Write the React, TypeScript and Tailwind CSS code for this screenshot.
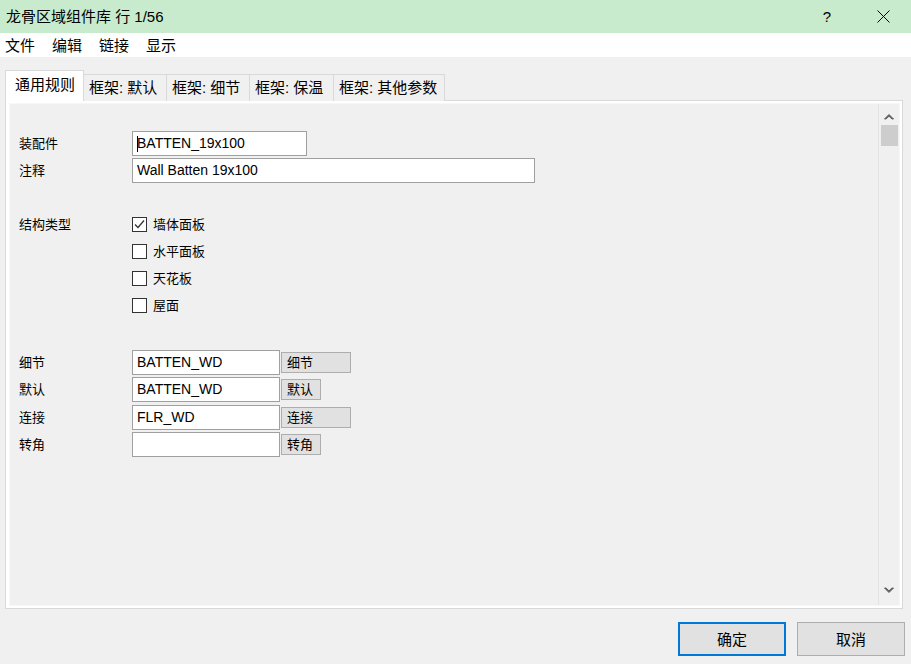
import { useState } from 'react';

const tabs = [
  { label: '通用规则', w: 'w-[79px]' },
  { label: '框架: 默认', w: 'w-[83px]' },
  { label: '框架: 细节', w: 'w-[83px]' },
  { label: '框架: 保温', w: 'w-[84px]' },
  { label: '框架: 其他参数', w: 'w-[111px]' },
];

const structureTypes = [
  { label: '墙体面板', checked: true },
  { label: '水平面板', checked: false },
  { label: '天花板', checked: false },
  { label: '屋面', checked: false },
];

const linkRows = [
  { label: '细节', value: 'BATTEN_WD', button: '细节', wide: true },
  { label: '默认', value: 'BATTEN_WD', button: '默认', wide: false },
  { label: '连接', value: 'FLR_WD', button: '连接', wide: true },
  { label: '转角', value: '', button: '转角', wide: false },
];

function Checkbox({ checked }: { checked: boolean }) {
  return (
    <div className="w-[15px] h-[15px] border border-[#333333] bg-white flex items-center justify-center">
      {checked && (
        <svg width="11" height="11" viewBox="0 0 11 11">
          <path d="M1 5.5 L4 8.5 L10 1.5" fill="none" stroke="#333333" strokeWidth="1.3" />
        </svg>
      )}
    </div>
  );
}

export default function App() {
  const [activeTab] = useState(0);

  return (
    <div className="w-[911px] h-[664px] bg-[#f0f0f0] flex flex-col overflow-hidden text-black font-['Liberation_Sans','Noto_Sans_CJK_SC',sans-serif]">
      {/* Title bar */}
      <div className="h-[33px] bg-[#c7ebcc] flex items-center shrink-0">
        <span className="pl-[6px] text-[15px] leading-none">龙骨区域组件库 行 1/56</span>
        <div className="ml-auto flex items-center">
          <span className="text-[15px] leading-none mr-[46px]">?</span>
          <svg width="13" height="13" viewBox="0 0 13 13" className="mr-[21px]">
            <path d="M0.5 0.5 L12.5 12.5 M12.5 0.5 L0.5 12.5" stroke="#000" strokeWidth="1" />
          </svg>
        </div>
      </div>

      {/* Menu bar */}
      <div className="h-[24px] bg-white flex items-center gap-[17px] px-[5px] text-[15px] leading-none shrink-0">
        <span>文件</span>
        <span>编辑</span>
        <span>链接</span>
        <span>显示</span>
      </div>

      <div className="pl-[5px] pr-[8px] pt-[13px] flex flex-col">
        {/* Tabs */}
        <div className="flex items-end h-[31px] relative z-10">
          {tabs.map((t, i) =>
            i === activeTab ? (
              <div
                key={t.label}
                className={`${t.w} h-[31px] bg-white border border-b-0 border-[#d9d9d9] pl-[9px] pt-[4px] text-[15px] leading-[20px]`}
              >
                {t.label}
              </div>
            ) : (
              <div
                key={t.label}
                className={`${t.w} h-[27px] bg-[#f0f0f0] border border-l-0 border-b-0 border-[#d9d9d9] pl-[5px] pt-[3px] text-[15px] leading-[20px] whitespace-nowrap`}
              >
                {t.label}
              </div>
            )
          )}
        </div>

        {/* Tab page */}
        <div className="h-[509px] -mt-px border border-[#d9d9d9] bg-white pt-[2px] pb-[2px] pl-[3px] pr-[2px]">
          <div className="h-full bg-[#f0f0f0] border border-[#f7f7f7] flex">
            <div className="flex-1 pl-[9px] pt-[27px] text-[13px]">
              {/* Assembly */}
              <div className="flex flex-col gap-[2px]">
                <div className="flex items-center h-[25px]">
                  <span className="w-[113px] leading-none">装配件</span>
                  <div className="w-[175px] h-[25px] border border-[#a0a0a0] bg-white flex items-center pl-[4px] text-[14px] relative">
                    <span className="absolute left-[4px] top-[4px] w-px h-[16px] bg-black" />
                    BATTEN_19x100
                  </div>
                </div>
                <div className="flex items-center h-[25px]">
                  <span className="w-[113px] leading-none">注释</span>
                  <div className="w-[403px] h-[25px] border border-[#a0a0a0] bg-white flex items-center pl-[4px] text-[14px]">
                    Wall Batten 19x100
                  </div>
                </div>
              </div>

              {/* Structure type */}
              <div className="flex mt-[28px]">
                <span className="w-[113px] h-[27px] flex items-center leading-none">结构类型</span>
                <div className="flex flex-col">
                  {structureTypes.map((s) => (
                    <div key={s.label} className="h-[27px] flex items-center gap-[6px]">
                      <Checkbox checked={s.checked} />
                      <span className="leading-none">{s.label}</span>
                    </div>
                  ))}
                </div>
              </div>

              {/* Links */}
              <div className="flex flex-col gap-[2.4px] mt-[31px]">
                {linkRows.map((r) => (
                  <div key={r.label} className="flex items-center h-[25px]">
                    <span className="w-[113px] leading-none">{r.label}</span>
                    <div className="w-[148px] h-[25px] border border-[#a0a0a0] bg-white flex items-center pl-[4px] text-[14px]">
                      {r.value}
                    </div>
                    <div
                      className={`${r.wide ? 'w-[70px]' : 'w-[40px]'} h-[21px] ml-[1px] bg-[#e1e1e1] border border-[#adadad] flex items-center pl-[5px] leading-none`}
                    >
                      {r.button}
                    </div>
                  </div>
                ))}
              </div>
            </div>

            {/* Scrollbar */}
            <div className="w-[21px] border-l border-[#e3e3e3] flex flex-col items-center">
              <div className="h-[21px] flex items-center justify-center pt-[4px]">
                <svg width="10" height="7" viewBox="0 0 10 7">
                  <path d="M0.5 6 L5 1.5 L9.5 6 L8 6 L5 3.2 L2 6 Z" fill="#606060" stroke="#606060" strokeWidth="1" />
                </svg>
              </div>
              <div className="w-[17px] h-[21px] bg-[#cdcdcd]" />
              <div className="flex-1" />
              <div className="h-[21px] flex items-center justify-center pb-[8px]">
                <svg width="10" height="7" viewBox="0 0 10 7">
                  <path d="M0.5 1 L5 5.5 L9.5 1 L8 1 L5 3.8 L2 1 Z" fill="#606060" stroke="#606060" strokeWidth="1" />
                </svg>
              </div>
            </div>
          </div>
        </div>
      </div>

      {/* Footer buttons */}
      <div className="flex justify-end gap-[11px] pr-[6px] mt-[13px]">
        <button className="w-[108px] h-[34px] bg-[#e1e1e1] border-2 border-[#0078d7] text-[15px] leading-none">
          确定
        </button>
        <button className="w-[108px] h-[34px] bg-[#e1e1e1] border border-[#adadad] text-[15px] leading-none">
          取消
        </button>
      </div>
    </div>
  );
}
